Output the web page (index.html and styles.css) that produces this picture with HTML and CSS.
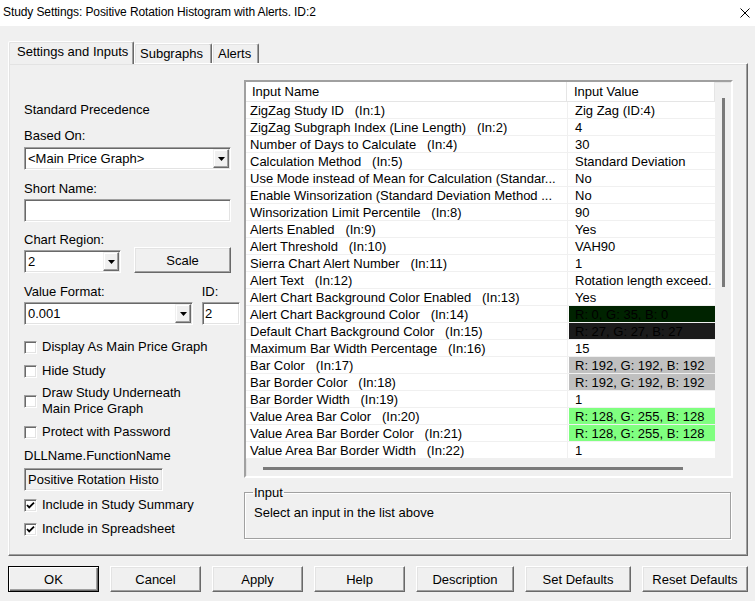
FILE: index.html
```html
<!DOCTYPE html>
<html>
<head>
<meta charset="utf-8">
<link rel="stylesheet" href="styles.css">
</head>
<body>
<div class="window">
  <div class="titlebar">
    <span class="title">Study Settings: Positive Rotation Histogram with Alerts. ID:2</span>
    <svg class="close" width="10" height="10" viewBox="0 0 10 10"><path d="M0.5 0.5 L9.5 9.5 M9.5 0.5 L0.5 9.5" stroke="#000" stroke-width="1" fill="none"/></svg>
  </div>

  <div class="tabs">
    <div class="tab active">Settings and Inputs</div>
    <div class="tab t-sub">Subgraphs</div>
    <div class="tab t-alerts">Alerts</div>
  </div>

  <div class="panel">
    <div class="left">
      <div class="lbl">Standard Precedence</div>
      <div class="lbl m-based">Based On:</div>
      <div class="combo c-based"><span class="ctext">&lt;Main Price Graph&gt;</span><span class="drop"><svg width="7" height="4" viewBox="0 0 7 4"><polygon points="0,0 7,0 3.5,4" fill="#000"/></svg></span></div>
      <div class="lbl m-short">Short Name:</div>
      <div class="edit e-short"></div>
      <div class="lbl m-region">Chart Region:</div>
      <div class="region-row">
        <div class="combo c-region"><span class="ctext">2</span><span class="drop"><svg width="7" height="4" viewBox="0 0 7 4"><polygon points="0,0 7,0 3.5,4" fill="#000"/></svg></span></div>
        <div class="btn b-scale">Scale</div>
      </div>
      <div class="vf-labels"><span>Value Format:</span><span class="id-lbl">ID:</span></div>
      <div class="vf-row">
        <div class="combo c-format"><span class="ctext">0.001</span><span class="drop"><svg width="7" height="4" viewBox="0 0 7 4"><polygon points="0,0 7,0 3.5,4" fill="#000"/></svg></span></div>
        <div class="edit e-id"><span class="ctext">2</span></div>
      </div>
      <div class="chk m-c1"><span class="box"></span><span>Display As Main Price Graph</span></div>
      <div class="chk m-c2"><span class="box"></span><span>Hide Study</span></div>
      <div class="chk m-c3"><span class="box"></span><span>Draw Study Underneath<br>Main Price Graph</span></div>
      <div class="chk m-c4"><span class="box"></span><span>Protect with Password</span></div>
      <div class="lbl m-dll">DLLName.FunctionName</div>
      <div class="edit readonly e-dll"><span class="ctext">Positive Rotation Histo</span></div>
      <div class="chk m-c5"><span class="box"><svg width="9" height="9" viewBox="0 0 9 9"><path d="M1 4 L3.2 6.4 L8 1.6" stroke="#000" stroke-width="1.8" fill="none"/></svg></span><span>Include in Study Summary</span></div>
      <div class="chk m-c6"><span class="box"><svg width="9" height="9" viewBox="0 0 9 9"><path d="M1 4 L3.2 6.4 L8 1.6" stroke="#000" stroke-width="1.8" fill="none"/></svg></span><span>Include in Spreadsheet</span></div>
    </div>

    <div class="right">
      <div class="listbox">
        <div class="lb-top">
          <div class="list">
            <div class="hdr"><div class="hname">Input Name</div><div class="hval">Input Value</div></div>
            <div class="row"><div class="name">ZigZag Study ID   (In:1)</div><div class="val">Zig Zag (ID:4)</div></div>
            <div class="row"><div class="name">ZigZag Subgraph Index (Line Length)   (In:2)</div><div class="val">4</div></div>
            <div class="row"><div class="name">Number of Days to Calculate   (In:4)</div><div class="val">30</div></div>
            <div class="row"><div class="name">Calculation Method   (In:5)</div><div class="val">Standard Deviation</div></div>
            <div class="row"><div class="name">Use Mode instead of Mean for Calculation (Standar...</div><div class="val">No</div></div>
            <div class="row"><div class="name">Enable Winsorization (Standard Deviation Method ...</div><div class="val">No</div></div>
            <div class="row"><div class="name">Winsorization Limit Percentile   (In:8)</div><div class="val">90</div></div>
            <div class="row"><div class="name">Alerts Enabled   (In:9)</div><div class="val">Yes</div></div>
            <div class="row"><div class="name">Alert Threshold   (In:10)</div><div class="val">VAH90</div></div>
            <div class="row"><div class="name">Sierra Chart Alert Number   (In:11)</div><div class="val">1</div></div>
            <div class="row"><div class="name">Alert Text   (In:12)</div><div class="val">Rotation length exceed.</div></div>
            <div class="row"><div class="name">Alert Chart Background Color Enabled   (In:13)</div><div class="val">Yes</div></div>
            <div class="row"><div class="name">Alert Chart Background Color   (In:14)</div><div class="val sw-green-dark">R: 0, G: 35, B: 0</div></div>
            <div class="row"><div class="name">Default Chart Background Color   (In:15)</div><div class="val sw-dark">R: 27, G: 27, B: 27</div></div>
            <div class="row"><div class="name">Maximum Bar Width Percentage   (In:16)</div><div class="val">15</div></div>
            <div class="row"><div class="name">Bar Color   (In:17)</div><div class="val sw-grey">R: 192, G: 192, B: 192</div></div>
            <div class="row"><div class="name">Bar Border Color   (In:18)</div><div class="val sw-grey">R: 192, G: 192, B: 192</div></div>
            <div class="row"><div class="name">Bar Border Width   (In:19)</div><div class="val">1</div></div>
            <div class="row"><div class="name">Value Area Bar Color   (In:20)</div><div class="val sw-green">R: 128, G: 255, B: 128</div></div>
            <div class="row"><div class="name">Value Area Bar Border Color   (In:21)</div><div class="val sw-green">R: 128, G: 255, B: 128</div></div>
            <div class="row"><div class="name">Value Area Bar Border Width   (In:22)</div><div class="val">1</div></div>
          </div>
          <div class="vtrack"><div class="vthumb"></div></div>
        </div>
        <div class="htrack"><div class="hthumb"></div></div>
      </div>

      <fieldset class="group">
        <legend>Input</legend>
        <div class="group-text">Select an input in the list above</div>
      </fieldset>
    </div>
  </div>

  <div class="buttons">
    <div class="btn default w91">OK</div>
    <div class="btn w91">Cancel</div>
    <div class="btn w91">Apply</div>
    <div class="btn w91">Help</div>
    <div class="btn w98">Description</div>
    <div class="btn w106">Set Defaults</div>
    <div class="btn w106">Reset Defaults</div>
  </div>
</div>
</body>
</html>
```

FILE: styles.css
```css
* { box-sizing: border-box; }
html, body { margin: 0; padding: 0; }
body {
  font-family: "Liberation Sans", Arial, sans-serif;
  font-size: 13px;
  color: #000;
  background: #f0f0f0;
}
.window {
  width: 755px;
  height: 601px;
  background: #f0f0f0;
  overflow: hidden;
}
.titlebar {
  height: 26px;
  background: #ffffff;
  display: flex;
  align-items: center;
  justify-content: space-between;
  padding: 0 5px 2px 3px;
}
.title {
  font-size: 12px;
  line-height: 14px;
  letter-spacing: -0.1px;
}
.close { display: block; margin-top: 1px; }

/* tabs */
.tabs {
  display: flex;
  align-items: flex-end;
  height: 22px;
  margin: 15px 0 0 8px;
  position: relative;
  z-index: 1;
}
.tab {
  height: 20px;
  line-height: 19px;
  padding: 0 6px;
  border: 1px solid;
  border-bottom: none;
  border-color: #fff #696969 transparent #fff;
  box-shadow: inset -1px 0 0 #a0a0a0, inset 1px 1px 0 #e3e3e3;
  border-radius: 2px 2px 0 0;
  background: #f0f0f0;
  white-space: nowrap;
}
.tab.active {
  height: 23px;
  margin-bottom: -1px;
  width: 126px;
  padding: 0 8px;
  line-height: 20px;
}
.t-sub { width: 78px; padding-left: 5px; }
.t-alerts { width: 47px; padding-left: 5px; }

/* panel */
.panel {
  margin-left: 8px;
  width: 740px;
  height: 493px;
  border: 1px solid;
  border-color: #fff #696969 #696969 #fff;
  box-shadow: inset -1px -1px 0 #a0a0a0, inset 1px 1px 0 #e3e3e3;
  display: flex;
}
.left {
  width: 231px;
  padding: 38px 0 0 15px;
  flex: none;
}
.right {
  width: 489px;
  margin-left: 4px;
  padding-top: 16px;
  flex: none;
}

.lbl { line-height: 15px; height: 15px; white-space: nowrap; }
.m-based { margin-top: 11px; }
.m-short { margin-top: 11px; }
.m-region { margin-top: 10px; }
.m-dll { margin-top: 8px; }

.edit, .combo {
  height: 23px;
  background: #fff;
  border: 1px solid;
  border-color: #a0a0a0 #fff #fff #a0a0a0;
  box-shadow: inset 1px 1px 0 #696969, inset -1px -1px 0 #e3e3e3;
  display: flex;
  align-items: center;
  overflow: hidden;
}
.ctext { padding-left: 3px; white-space: nowrap; line-height: 15px; }
.combo { justify-content: space-between; padding: 1px; }
.combo .ctext { padding-left: 2px; }
.drop {
  width: 16px;
  height: 19px;
  background: #f0f0f0;
  border: 1px solid;
  border-color: #f0f0f0 #696969 #696969 #f0f0f0;
  box-shadow: inset -1px -1px 0 #a0a0a0, inset 1px 1px 0 #fff;
  display: flex;
  align-items: center;
  justify-content: center;
  flex: none;
}
.drop svg { display: block; margin-top: 1px; }

.c-based { width: 207px; margin-top: 4px; }
.e-short { width: 207px; margin-top: 3px; }
.region-row {
  display: flex;
  align-items: flex-end;
  justify-content: space-between;
  width: 207px;
}
.c-region { width: 97px; }
.b-scale { width: 97px; height: 27px; }
.vf-labels {
  margin-top: 11px;
  display: flex;
  line-height: 15px;
  height: 15px;
}
.id-lbl { margin-left: 97px; }
.vf-row {
  margin-top: 3px;
  display: flex;
  justify-content: space-between;
  width: 216px;
}
.c-format { width: 169px; }
.e-id { width: 38px; }
.e-id .ctext { padding-left: 2px; }

.chk {
  display: flex;
  align-items: center;
  line-height: 16px;
  white-space: nowrap;
}
.box {
  width: 13px;
  height: 13px;
  flex: none;
  margin-right: 5px;
  background: #fff;
  border: 1px solid;
  border-color: #a0a0a0 #fff #fff #a0a0a0;
  box-shadow: inset 1px 1px 0 #696969, inset -1px -1px 0 #e3e3e3;
  display: flex;
  align-items: center;
  justify-content: center;
}
.box svg { display: block; }
.m-c1 { margin-top: 14px; }
.m-c2 { margin-top: 8px; }
.m-c3 { margin-top: 6px; }
.m-c4 { margin-top: 7px; }
.m-c5 { margin-top: 6px; }
.m-c6 { margin-top: 8px; }

.readonly { background: #f0f0f0; }
.e-dll { width: 139px; margin-top: 5px; }

/* buttons */
.btn {
  height: 26px;
  background: #f0f0f0;
  border: 1px solid;
  border-color: #fff #696969 #696969 #fff;
  box-shadow: inset -1px -1px 0 #a0a0a0, inset 1px 1px 0 #e3e3e3;
  display: flex;
  align-items: center;
  justify-content: center;
  white-space: nowrap;
  flex: none;
}
.btn.default {
  border-color: #000;
  box-shadow: inset 1px 1px 0 #fff, inset -1px -1px 0 #696969, inset -2px -2px 0 #a0a0a0;
}
.buttons {
  display: flex;
  gap: 11px;
  margin: 10px 0 0 8px;
}
.w91 { width: 91px; }
.w98 { width: 98px; }
.w106 { width: 106px; }

/* listbox */
.listbox {
  width: 489px;
  height: 398px;
  border: 2px solid;
  border-color: #a0a0a0 #fff #fff #a0a0a0;
  box-shadow: inset 1px 1px 0 #e3e3e3;
  background: #f0f0f0;
  display: flex;
  flex-direction: column;
}
.lb-top { display: flex; height: 377px; }
.list {
  width: 469px;
  background: #fff;
  flex: none;
}
.hdr {
  display: flex;
  height: 20px;
  border-bottom: 1px solid #e5e5e5;
  line-height: 19px;
}
.hname {
  width: 321px;
  padding-left: 6px;
  border-right: 1px solid #e5e5e5;
}
.hval {
  flex: 1;
  padding-left: 7px;
  border-right: 1px solid #e5e5e5;
}
.row {
  display: flex;
  height: 17px;
  border-bottom: 1px solid #f0f0f0;
}
.name, .val {
  height: 16px;
  padding-top: 2px;
  line-height: 14px;
  white-space: pre;
  overflow: hidden;
}
.name {
  width: 322px;
  padding-left: 4px;
  border-right: 1px solid #f0f0f0;
  flex: none;
}
.val {
  flex: 1;
  padding-left: 6px;
  margin-left: 1px;
}
.sw-green-dark { background: #002300; }
.sw-dark { background: #1b1b1b; }
.sw-grey { background: #c0c0c0; }
.sw-green { background: #80ff80; }

.vtrack { flex: 1; }
.vthumb {
  width: 3px;
  height: 189px;
  margin: 16px 0 0 7px;
  background: #7a7a7a;
}
.htrack { flex: 1; }
.hthumb {
  width: 420px;
  height: 3px;
  margin: 8px 0 0 17px;
  background: #7a7a7a;
}

/* group */
.group {
  margin: 7px 2px 0 0;
  padding: 0 0 0 8px;
  height: 54px;
  border: 1px solid #a0a0a0;
  box-shadow: inset 1px 1px 0 #fff, 1px 1px 0 #fff;
  min-width: 0;
}
.group legend {
  padding: 0 1px;
  line-height: 15px;
  font-size: 13px;
}
.group-text {
  padding: 5px 0 0 1px;
  line-height: 15px;
}
```
